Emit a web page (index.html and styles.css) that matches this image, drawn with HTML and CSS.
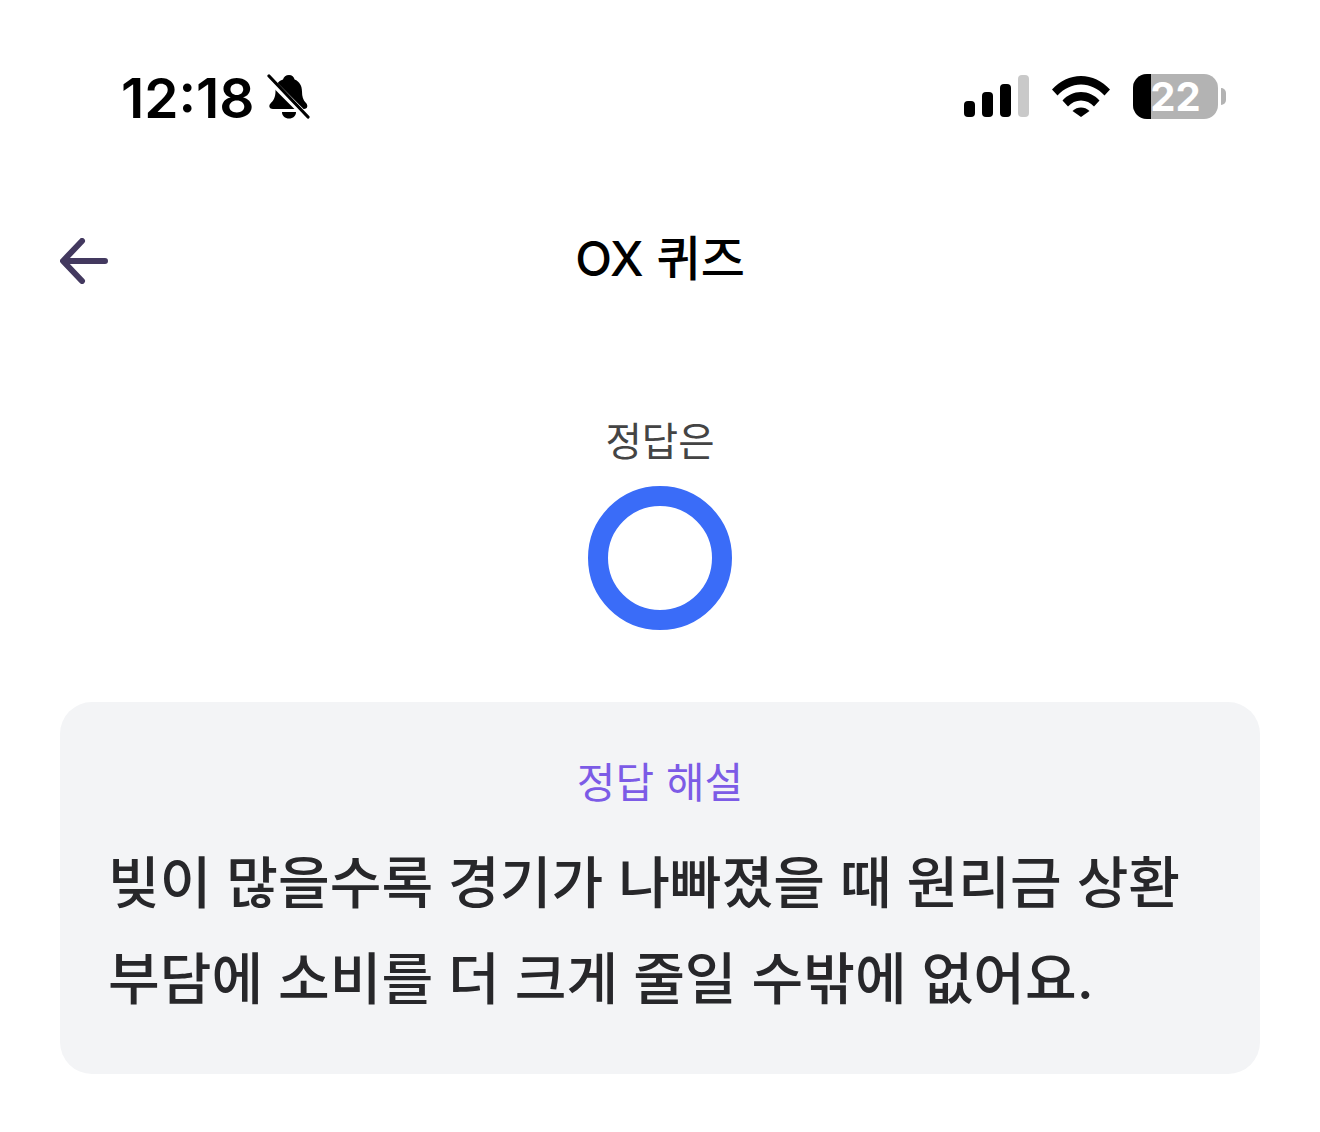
FILE: index.html
```html
<!DOCTYPE html>
<html lang="ko">
<head>
  <meta charset="UTF-8" />
  <title>OX 퀴즈</title>
  <link rel="stylesheet" href="styles.css">
</head>
<body>

<!-- Status bar -->
<div class="status-bar">
  <div class="status-left">
    <span class="clock">12:18</span>
    <svg class="bell" width="44" height="46" viewBox="0 0 44 46">
      <path d="M22 1c3 0 5 2 5.600 4.500 5 2 7.400 6.500 7.400 12 0 5 1 8.500 4 11.500 2 2 2 6-2 6H6c-4 0-4.500-3.500-2.500-5.500 3-3 5-6 5-12.500 0-6 2.500-10 7.500-11.500C16.600 3 19 1 22 1z" fill="#000"/>
      <path d="M15 38h14c0 4-3 6.500-7 6.500s-7-2.500-7-6.500z" fill="#000"/>
      <path d="M1 4l40 40" stroke="#fff" stroke-width="6.500"/>
      <path d="M2 2l39 41" stroke="#000" stroke-width="3.200" stroke-linecap="round"/>
    </svg>
  </div>
  <div class="status-right">
    <svg class="signal" width="66" height="42" viewBox="0 0 66 42">
      <rect x="0" y="26" width="11" height="16" rx="4" fill="#000"/>
      <rect x="18" y="17" width="11" height="25" rx="4" fill="#000"/>
      <rect x="36" y="9" width="11" height="33" rx="4" fill="#000"/>
      <rect x="54" y="0" width="11" height="42" rx="4" fill="#c9c9c9"/>
    </svg>
    <svg class="wifi" width="58" height="42" viewBox="0 0 58 42">
      <path d="M0 14.500C8 6 18 1 29 1s21 5 29 13.500l-5.500 6C46 13.500 38 9.500 29 9.500S12 13.500 5.500 20.500z" fill="#000"/>
      <path d="M10.500 25.500C15.500 20 22 17 29 17s13.500 3 18.500 8.500l-5.500 6C38.500 27.500 34 25.500 29 25.500s-9.500 2-13 6z" fill="#000"/>
      <path d="M20.500 36C23 33.500 26 32.500 29 32.500s6 1 8.500 3.500L29 42z" fill="#000"/>
    </svg>
    <div class="battery">
      <div class="battery-body">
        <div class="battery-fill"></div>
        <span class="battery-num">22</span>
      </div>
      <div class="battery-cap"></div>
    </div>
  </div>
</div>

<!-- Header -->
<header class="nav">
  <svg class="back" width="48" height="46" viewBox="0 0 48 46">
    <path d="M22 3L3 23l19 20M4 23h41" fill="none" stroke="#43395f" stroke-width="6" stroke-linecap="round" stroke-linejoin="round"/>
  </svg>
  <h1>OX 퀴즈</h1>
</header>

<!-- Answer -->
<section class="answer">
  <p class="answer-label">정답은</p>
  <div class="ring"></div>
</section>

<!-- Explanation -->
<section class="card">
  <h2>정답 해설</h2>
  <p>빚이 많을수록 경기가 나빠졌을 때 원리금 상환<br>부담에 소비를 더 크게 줄일 수밖에 없어요.</p>
</section>

</body>
</html>
```

FILE: styles.css
```css
* {
  box-sizing: border-box;
}

html, body {
  margin: 0;
  padding: 0;
  background-color: #fff;
  font-family: 'Inter', 'Noto Sans CJK KR', sans-serif;
  color: #000;
}

body {
  width: 1320px;
  height: 1132px;
  overflow: hidden;
}

.status-bar {
  display: flex;
  justify-content: space-between;
  align-items: center;
  height: 46px;
  margin-top: 73px;
  padding: 0 94px 0 121px;
}

.status-left {
  display: flex;
  align-items: center;
  gap: 12px;
}

.clock {
  padding-top: 4px;
  font-size: 55px;
  font-weight: 600;
  line-height: 46px;
}

.bell {
  margin-top: 2px;
}

.status-right {
  display: flex;
  align-items: center;
}

.signal {
  margin-right: 22px;
}

.wifi {
  margin-right: 23px;
}

.battery {
  display: flex;
  align-items: center;
}

.battery-body {
  position: relative;
  width: 85px;
  height: 45px;
  border-radius: 14px;
  background-color: #b3b3b3;
  text-align: center;
}

.battery-fill {
  position: absolute;
  left: 0;
  top: 0;
  bottom: 0;
  width: 18px;
  border-radius: 14px 0 0 14px;
  background-color: #000;
}

.battery-num {
  position: relative;
  font-size: 40px;
  font-weight: 700;
  line-height: 45px;
  color: #fff;
}

.battery-cap {
  width: 5px;
  height: 17px;
  margin-left: 3px;
  border-radius: 0 5px 5px 0;
  background-color: #b3b3b3;
}

.nav {
  position: relative;
  display: flex;
  justify-content: center;
  align-items: center;
  height: 60px;
  margin-top: 110px;
}

.nav h1 {
  margin: 0;
  font-size: 48px;
  font-weight: 500;
  line-height: 56px;
}

.back {
  position: absolute;
  left: 60px;
  top: 9px;
}

.answer {
  display: flex;
  flex-direction: column;
  align-items: center;
  margin-top: 125px;
}

.answer-label {
  margin: 0;
  font-size: 39.5px;
  line-height: 56px;
  color: #444;
}

.ring {
  width: 144px;
  height: 144px;
  margin-top: 16px;
  border: 20px solid #3a6cf8;
  border-radius: 50%;
}

.card {
  margin: 72px 60px 0;
  padding: 53px 48px 50px;
  height: 372px;
  border-radius: 32px;
  background-color: #f3f4f6;
}

.card h2 {
  margin: 0;
  font-size: 42px;
  font-weight: 400;
  line-height: 56px;
  text-align: center;
  color: #7c5be6;
}

.card p {
  margin: 24px 0 0;
  font-size: 56.2px;
  font-weight: 500;
  line-height: 96px;
  color: #27272a;
  white-space: nowrap;
}
```
